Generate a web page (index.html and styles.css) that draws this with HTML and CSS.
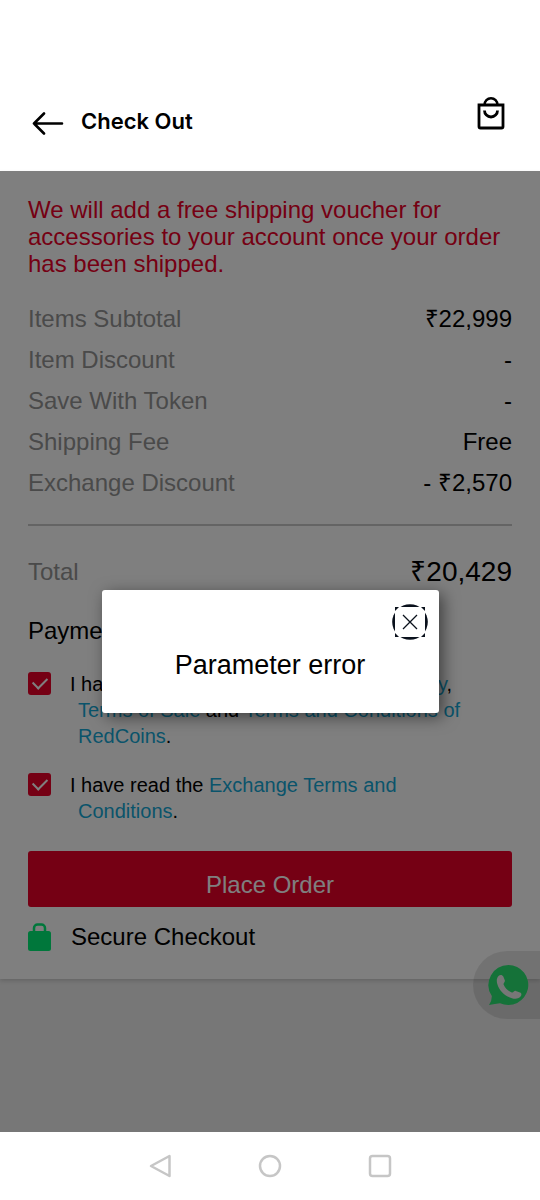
FILE: index.html
```html
<!DOCTYPE html>
<html lang="en">
<head>
<meta charset="utf-8">
<meta name="viewport" content="width=device-width, initial-scale=1">
<title>Check Out</title>
<link rel="stylesheet" href="styles.css">
</head>
<body>
<header class="topbar">
  <button class="icon-button" type="button" aria-label="Back">
    <svg width="32" height="24" viewBox="0 0 32 24" fill="none" stroke="#000" stroke-width="2.6" stroke-linecap="round" stroke-linejoin="round"><path d="M30 12.500H2M12 2.500 2 12.500l10 10"/></svg>
  </button>
  <h1 class="topbar-title">Check Out</h1>
  <button class="icon-button bag" type="button" aria-label="Shopping bag">
    <svg width="28" height="34" viewBox="0 0 28 34" fill="none" stroke="#000" stroke-width="2.800"><path d="M2 9h24v21.500a1.500 1.500 0 0 1-1.500 1.500h-21A1.500 1.500 0 0 1 2 30.500z"/><path d="M7.500 9a6.500 6.800 0 0 1 13 0" stroke-width="2.500"/><path d="M7.500 14.500a6.500 6.500 0 0 0 13 0"/></svg>
  </button>
</header>

<main class="page">
  <section class="card">
    <p class="notice">We will add a free shipping voucher for accessories to your account once your order has been shipped.</p>
    <dl class="summary">
      <div class="row"><dt>Items Subtotal</dt><dd>₹22,999</dd></div>
      <div class="row"><dt>Item Discount</dt><dd>-</dd></div>
      <div class="row"><dt>Save With Token</dt><dd>-</dd></div>
      <div class="row"><dt>Shipping Fee</dt><dd>Free</dd></div>
      <div class="row"><dt>Exchange Discount</dt><dd>- ₹2,570</dd></div>
      <div class="row total"><dt>Total</dt><dd>₹20,429</dd></div>
    </dl>
    <h2 class="payment">Payment</h2>
    <div class="consents">
      <div class="consent">
        <input class="tick" type="checkbox" id="terms" checked>
        <label for="terms">I have read and accept your <a href="#privacy">Privacy Policy</a>, <a href="#sale">Terms of Sale</a> and <a href="#redcoins">Terms and Conditions of RedCoins</a>.</label>
      </div>
      <div class="consent">
        <input class="tick" type="checkbox" id="exchange" checked>
        <label for="exchange">I have read the <a href="#exchange-terms">Exchange Terms and Conditions</a>.</label>
      </div>
    </div>
    <button class="place-order" type="button">Place Order</button>
    <p class="secure">
      <svg width="23" height="28" viewBox="0 0 23 28"><rect y="8" width="23" height="20" rx="2.500" fill="#00ee76"/><path d="M6 9V5a3.500 3.500 0 0 1 3.500-3.500h4A3.500 3.500 0 0 1 17 5v4" fill="none" stroke="#00ee76" stroke-width="2.500"/></svg>
      Secure Checkout
    </p>
  </section>

  <button class="chat" type="button" aria-label="Chat on WhatsApp">
    <svg width="42" height="42" viewBox="0 0 42 42"><path d="M21.500 1a20 20 0 1 1-8.500 38.200Q8 40 2 41q3-4 2.800-9A20 20 0 0 1 21.500 1z" fill="#2ae572"/><path d="M11.500 12c1.500-1.600 4-1.200 4.800.6l1.500 3.600c.6 1.800-1.600 3-1.200 4.300 1.600 3.800 4.600 6.600 8.200 8 1.600.5 2.400-2 4-1.600l4.200 1.700c1.600.7 1.700 2 .9 3.400-1.800 3-5.700 3.200-9 2.200-7.500-2.300-12.700-7.700-14.600-14.200-.8-2.800-.8-6 1.200-8z" fill="#eee"/></svg>
  </button>

  <div class="scrim">
    <div class="dialog" role="alertdialog" aria-labelledby="message">
      <button class="close" type="button" aria-label="Close">
        <svg width="36" height="36" viewBox="0 0 36 36"><circle cx="18" cy="18" r="17.800" fill="#0a111c"/><rect x="3" y="3" width="30" height="30" fill="#fff"/><path d="M3 3h4L3 7zM33 3v4l-4-4zM33 33h-4l4-4zM3 33v-4l4 4z" fill="#0a111c"/><path d="m11 11 14 14M25 11 11 25" stroke="#0a111c" stroke-width="1.300"/></svg>
      </button>
      <p class="message" id="message">Parameter error</p>
    </div>
  </div>
</main>

<nav class="system-nav" aria-label="System">
  <button class="icon-button" type="button" aria-label="Back">
    <svg width="24" height="24" viewBox="0 0 24 24" fill="none" stroke="#c6c6c6" stroke-width="2.500" stroke-linejoin="round"><path d="M21.500 2v20L3 12z"/></svg>
  </button>
  <button class="icon-button" type="button" aria-label="Home">
    <svg width="24" height="24" viewBox="0 0 24 24" fill="none" stroke="#c6c6c6" stroke-width="2.500"><circle cx="12" cy="12" r="10"/></svg>
  </button>
  <button class="icon-button" type="button" aria-label="Recent apps">
    <svg width="24" height="24" viewBox="0 0 24 24" fill="none" stroke="#c6c6c6" stroke-width="2.500"><rect x="2" y="2" width="20" height="20" rx="2.500"/></svg>
  </button>
</nav>
</body>
</html>
```
FILE: styles.css
```css
* {
  box-sizing: border-box;
}

body {
  margin: 0;
  min-height: 100vh;
  display: flex;
  flex-direction: column;
  background: #fff;
  color: #000;
  font-family: "Liberation Sans", Arial, sans-serif;
  font-size: 24px;
  line-height: 28px;
}

button {
  margin: 0;
  padding: 0;
  border: 0;
  background: none;
  color: inherit;
  font: inherit;
}

svg {
  display: block;
}

h1,
h2,
p,
dl,
dd {
  margin: 0;
}

.topbar {
  display: flex;
  align-items: flex-end;
  gap: 17px;
  padding: 96px 35px 36px 32px;
}

.topbar-title {
  flex: 1;
  font-family: Inter, "Liberation Sans", sans-serif;
  font-size: 22px;
  font-weight: 600;
  line-height: 28px;
}

.topbar .bag {
  align-self: flex-start;
  padding-bottom: 5px;
}

.page {
  position: relative;
  flex: 1;
  background: #eee;
}

.card {
  padding: 25px 28px 28px;
  background: #fff;
  box-shadow: 0 2px 4px rgba(0, 0, 0, 0.15);
}

.notice {
  color: #eb0028;
  line-height: 27px;
}

.summary {
  padding-top: 21px;
}

.row {
  display: flex;
  justify-content: space-between;
  line-height: 41px;
}

.row dt {
  color: #949494;
}

.total {
  margin-top: 21px;
  padding-top: 25px;
  border-top: 2px solid #c8c8c8;
}

.total dd {
  font-size: 28px;
}

.payment {
  padding: 25px 0 26px;
  font-size: 24px;
  font-weight: 400;
}

.consents {
  display: grid;
  gap: 23px;
  padding: 0 24px 27px 0;
}

.consent {
  display: flex;
  align-items: flex-start;
  gap: 27px;
  font-size: 20px;
  line-height: 26px;
}

.consent label {
  text-indent: -8px;
}

.consent a {
  color: #14a8d6;
  text-decoration: none;
}

.tick {
  appearance: none;
  flex: none;
  display: grid;
  place-items: center;
  width: 23px;
  height: 23px;
  margin: 1px 0 0;
  border-radius: 3px;
  background: #eb0028;
}

.tick::after {
  content: "";
  width: 12px;
  height: 7px;
  border-left: 2px solid #fff;
  border-bottom: 2px solid #fff;
  transform: translateY(-2px) rotate(-45deg);
}

.place-order {
  display: block;
  width: 100%;
  padding: 20px 0 8px;
  border-radius: 3px;
  background: #eb0028;
  color: #fff;
}

.secure {
  display: flex;
  align-items: center;
  gap: 20px;
  padding-top: 16px;
}

.chat {
  position: absolute;
  right: 0;
  bottom: 113px;
  padding: 13px 11px 13px 14px;
  border-radius: 34px 0 0 34px;
  background: rgba(0, 0, 0, 0.1);
}

.scrim {
  position: absolute;
  inset: 0;
  display: flex;
  align-items: center;
  justify-content: center;
  background: rgba(0, 0, 0, 0.5);
}

.dialog {
  display: flex;
  flex-direction: column;
  width: 62%;
  min-width: 337px;
  padding: 14px 11px 34px;
  border-radius: 3px;
  background: #fff;
  box-shadow: 4px 4px 16px rgba(0, 0, 0, 0.5);
}

.close {
  align-self: flex-end;
}

.message {
  padding-top: 11px;
  font-size: 27px;
  text-align: center;
}

.system-nav {
  display: flex;
  justify-content: center;
  gap: 86px;
  padding: 22px 0;
}
```
